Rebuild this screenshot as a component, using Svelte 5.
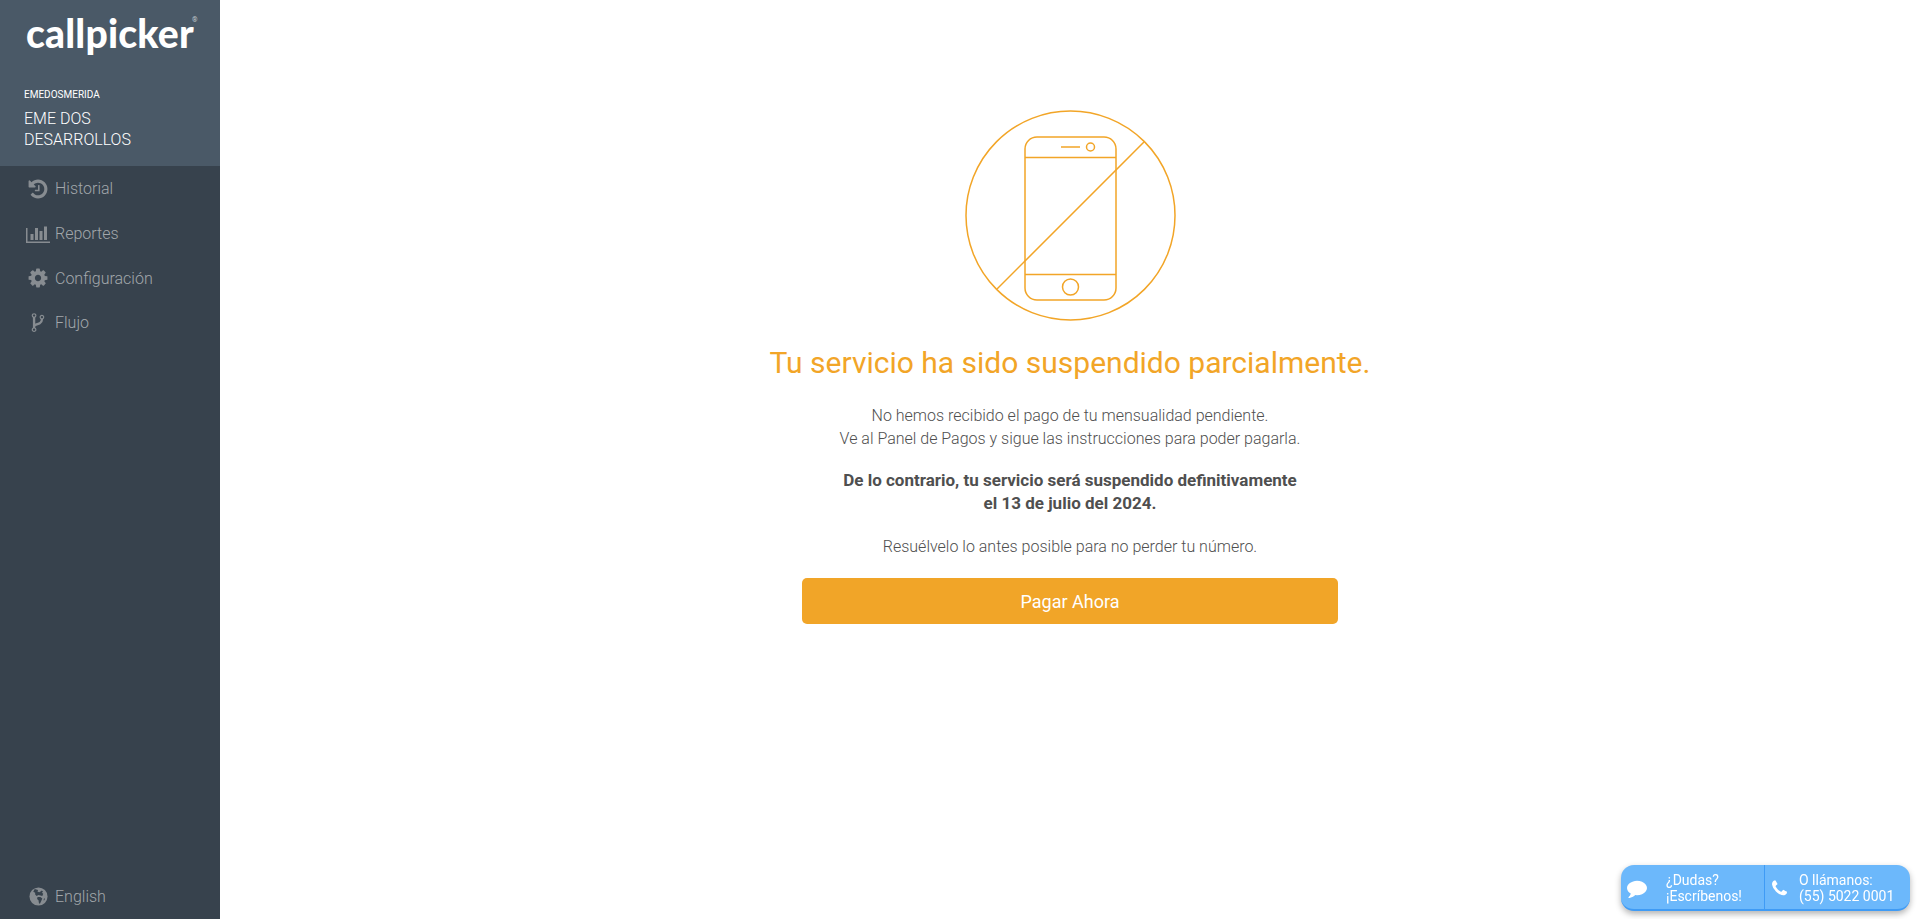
<script>
  const links = [
    { label: 'Historial', icon: 'history' },
    { label: 'Reportes', icon: 'chart' },
    { label: 'Configuración', icon: 'cog' },
    { label: 'Flujo', icon: 'fork' }
  ];

  const icons = {
    history: { box: '0 0 1792 1792', d: 'M1664 896q0 156-61 298t-164 245-245 164-298 61q-172 0-327-72.5t-264-204.5q-7-10-6.5-22.5t8.5-20.5l137-138q10-9 25-9 16 2 23 12 73 95 179 147t225 52q104 0 198.5-40.5t163.5-109.5 109.5-163.5 40.5-198.5-40.5-198.5-109.5-163.5-163.5-109.5-198.5-40.5q-98 0-188 35.5t-160 101.5l137 138q31 30 14 69-17 40-59 40h-448q-26 0-45-19t-19-45v-448q0-42 40-59 39-17 69 14l130 129q107-101 244.5-156.5t284.5-55.5q156 0 298 61t245 164 164 245 61 298zm-640-288v448q0 14-9 23t-23 9h-320q-14 0-23-9t-9-23v-64q0-14 9-23t23-9h224v-352q0-14 9-23t23-9h64q14 0 23 9t9 23z' },
    chart: { box: '0 0 2048 1792', d: 'M640 896v512h-256v-512h256zm384-512v1024h-256v-1024h256zm1024 1152v128h-2048v-1280h128v1152h1920zm-640-896v768h-256v-768h256zm384-384v1152h-256v-1152h256z' },
    cog: { box: '0 0 1792 1792', d: 'M1152 896q0-106-75-181t-181-75-181 75-75 181 75 181 181 75 181-75 75-181zm512-109v222q0 12-8 23t-20 13l-185 28q-19 54-39 91 35 50 107 138 10 12 10 25t-9 23q-27 37-99 108t-94 71q-12 0-26-9l-138-108q-44 23-91 38-16 136-29 186-7 28-36 28h-222q-14 0-24.5-8.5t-11.5-21.5l-28-184q-49-16-90-37l-141 107q-10 9-25 9-14 0-25-11-126-114-165-168-7-10-7-23 0-12 8-23 15-21 51-66.5t54-70.5q-27-50-41-99l-183-27q-13-2-21-12.5t-8-23.5v-222q0-12 8-23t19-13l186-28q14-46 39-92-40-57-107-138-10-12-10-24 0-10 9-23 26-36 98.5-107.5t94.5-71.5q13 0 26 10l138 107q44-23 91-38 16-136 29-186 7-28 36-28h222q14 0 24.5 8.5t11.5 21.5l28 184q49 16 90 37l142-107q9-9 24-9 13 0 25 10 129 119 165 170 7 8 7 22 0 12-8 23-15 21-51 66.5t-54 70.5q26 50 41 98l183 28q13 2 21 12.5t8 23.5z' },
    fork: { box: '-384 0 1792 1792', d: 'M288 1440q0-40-28-68t-68-28-68 28-28 68 28 68 68 28 68-28 28-68zm0-1152q0-40-28-68t-68-28-68 28-28 68 28 68 68 28 68-28 28-68zm640 128q0-40-28-68t-68-28-68 28-28 68 28 68 68 28 68-28 28-68zm96 0q0 52-26 96.5t-70 69.5q-2 287-226 414-67 38-203 81-128 40-169.5 71t-41.5 100v26q44 25 70 69.5t26 96.5q0 80-56 136t-136 56-136-56-56-136q0-52 26-96.5t70-69.5v-820q-44-25-70-69.5t-26-96.5q0-80 56-136t136-56 136 56 56 136q0 52-26 96.5t-70 69.5v497q54-26 154-57 55-17 87.5-29.5t70.5-31 59-39.5 40.5-51 28-69.5 8.5-91.5q-44-25-70-69.5t-26-96.5q0-80 56-136t136-56 136 56 56 136z' }
  };
</script>

<div class="page">
  <aside class="sidebar">
    <div class="account">
      <div class="logo">callpicker<span class="reg">®</span></div>
      <div class="user">EMEDOSMERIDA</div>
      <div class="company">EME DOS<br />DESARROLLOS</div>
    </div>

    <nav>
      {#each links as link}
        <a href="#top" class="nav-link">
          <span class="nav-icon">
            <svg viewBox={icons[link.icon].box} class={link.icon}><path d={icons[link.icon].d} /></svg>
          </span>
          {link.label}
        </a>
      {/each}
    </nav>

    <a href="#top" class="nav-link lang">
      <span class="nav-icon">
        <svg viewBox="0 0 20 20" class="globe">
          <circle cx="10" cy="10" r="9.5" />
          <path class="land" d="M6 2.2 9.5 3.2 9 5 11 5.5 13.5 3.8 14.8 5 13.5 6 15 7 14 9.5 12 9 10 8.5 8 9.5 6.5 8 6.5 6 4.5 5ZM9 10.5 12 10.5 14 12 13 14.5 11.5 17.5 10.5 17 10 14 8.5 12.5ZM15.5 12.5 16.6 11.5 16.5 13.5 15.5 14.5Z" />
        </svg>
      </span>
      English
    </a>
  </aside>

  <main>
    <svg class="phone" viewBox="0 0 212 212" fill="none">
      <circle cx="106.5" cy="105.5" r="104.5" />
      <rect x="61" y="27" width="91" height="163" rx="12" />
      <path d="M61 47.5H152M61 164.5H152M97 37H116" />
      <circle cx="126.5" cy="37" r="4" />
      <circle cx="106.5" cy="177" r="8" />
      <path d="M180 32 33 179" />
    </svg>

    <h1>Tu servicio ha sido suspendido parcialmente.</h1>

    <p>No hemos recibido el pago de tu mensualidad pendiente.<br />Ve al Panel de Pagos y sigue las instrucciones para poder pagarla.</p>
    <p class="strong">De lo contrario, tu servicio será suspendido definitivamente<br />el 13 de julio del 2024.</p>
    <p>Resuélvelo lo antes posible para no perder tu número.</p>

    <button>Pagar Ahora</button>
  </main>

  <div class="contact">
    <div class="contact-item chat">
      <svg viewBox="0 0 1792 1792" class="chat-icon"><path d="M1792 896q0 174-120 321.5t-326 233-450 85.5q-70 0-145-8-198 175-460 242-49 14-114 22-17 2-30.5-9t-17.5-29v-1q-3-4-.5-12t2-10 4.5-9.5l6-9 7-8.5 8-9q7-8 31-34.5t34.5-38 31-39.5 32.5-51 27-59 26-76q-157-89-247.5-220t-90.5-281q0-130 71-248.5t191-204.5 286-136.5 348-50.5q244 0 450 85.5t326 233 120 321.5z" /></svg>
      <span>¿Dudas?<br />¡Escríbenos!</span>
    </div>
    <div class="contact-item call">
      <svg viewBox="0 0 1792 1792" class="call-icon"><path d="M1600 1240q0 27-10 70.5t-21 68.5q-21 50-122 106-94 51-186 51-27 0-53-3.5t-57.5-12.5-47-14.5-55.5-20.5-49-18q-98-35-175-83-127-79-264-216t-216-264q-48-77-83-175-3-9-18-49t-20.5-55.5-14.5-47-12.5-57.5-3.5-53q0-92 51-186 56-101 106-122 25-11 68.5-21t70.5-10q14 0 21 3 18 6 53 76 11 19 30 54t35 63.5 31 53.5q3 4 17.5 25t21.5 35.5 7 28.5q0 20-28.5 50t-62 55-62 53-28.5 46q0 9 5 22.5t8.5 20.5 14 24 11.5 19q76 137 174 235t235 174q2 1 19 11.5t24 14 20.5 8.5 22.5 5q18 0 46-28.5t53-62 55-62 50-28.5q14 0 28.5 7t35.5 21.5 25 17.5q25 15 53.5 31t63.5 35 54 30q70 35 76 53 3 7 3 21z" /></svg>
      <span>O llámanos:<br />(55) 5022 0001</span>
    </div>
  </div>
</div>

<style>
  :global(body) {
    margin: 0;
    font-family: 'Roboto', sans-serif;
    background: #fff;
  }

  .page {
    display: flex;
    height: 919px;
    overflow: hidden;
  }

  /* Sidebar */
  .sidebar {
    width: 220px;
    flex-shrink: 0;
    display: flex;
    flex-direction: column;
    background: #37424d;
  }

  .account {
    height: 166px;
    box-sizing: border-box;
    padding: 11px 24px 0;
    background: #4a5967;
    color: #fff;
  }

  .logo {
    position: relative;
    width: 172px;
    margin-left: 2px;
    height: 58px;
    font-family: 'Lato', sans-serif;
    font-weight: 900;
    font-size: 39px;
    line-height: 44px;
    letter-spacing: 0.2px;
    white-space: nowrap;
  }

  .reg {
    position: absolute;
    top: 5px;
    left: 166px;
    font-family: 'Roboto', sans-serif;
    font-weight: 400;
    font-size: 7px;
    line-height: 8px;
    letter-spacing: 0;
    color: #c3c9cf;
  }

  .user {
    margin-top: 20px;
    font-size: 10px;
    font-weight: 400;
    line-height: 12px;
  }

  .company {
    margin-top: 7px;
    font-size: 16px;
    font-weight: 300;
    line-height: 21px;
  }

  nav {
    padding-top: 0.5px;
  }

  .nav-link {
    display: flex;
    align-items: center;
    height: 44.7px;
    padding-left: 25px;
    font-size: 16px;
    font-weight: 300;
    color: #a2a7ab;
    text-decoration: none;
  }

  .nav-icon {
    width: 30px;
    display: flex;
    justify-content: center;
    box-sizing: border-box;
    padding-right: 4px;
  }

  .nav-icon svg {
    width: 24px;
    height: 22px;
    fill: #878c91;
  }

  .lang {
    margin-top: auto;
    height: 46px;
  }

  .nav-icon .globe {
    width: 19px;
    height: 19px;
  }

  .land {
    fill: #37424d;
  }

  /* Notice */
  main {
    flex: 1;
    display: flex;
    flex-direction: column;
    align-items: center;
    padding-top: 110px;
    color: #4f4f4f;
  }

  .phone {
    width: 212px;
    height: 212px;
    flex-shrink: 0;
  }

  .phone * {
    stroke: #f2a527;
    stroke-width: 1.5;
  }

  h1 {
    margin: 23px 0 23px;
    font-size: 30px;
    font-weight: 400;
    line-height: 36px;
    color: #f2a527;
  }

  p {
    margin: 0 0 19px;
    font-size: 16px;
    font-weight: 300;
    line-height: 23px;
    text-align: center;
  }

  .strong {
    margin-bottom: 20px;
    font-size: 17px;
    font-weight: 700;
  }

  button {
    width: 536px;
    height: 46px;
    margin-top: 1px;
    border: 0;
    border-radius: 5px;
    background: #f1a528;
    color: #fff;
    font-family: inherit;
    font-size: 18px;
    font-weight: 400;
  }

  /* Contact widget */
  .contact {
    position: fixed;
    right: 10px;
    bottom: 8px;
    width: 289px;
    height: 46px;
    display: flex;
    box-sizing: border-box;
    border-bottom: 2px solid #3f9bf5;
    border-radius: 13px;
    background: #6cb8fb;
    box-shadow: 0 3px 6px rgba(0, 0, 0, 0.3);
    color: #fff;
    font-size: 14px;
    line-height: 16px;
  }

  .contact-item {
    display: flex;
    align-items: center;
    padding-top: 2px;
  }

  .chat {
    width: 143px;
    border-right: 1px solid #3f9bf5;
  }

  .chat-icon {
    width: 20px;
    height: 20px;
    margin-left: 6px;
    fill: #fff;
  }

  .chat span {
    margin-left: 19px;
  }

  .call-icon {
    width: 19px;
    height: 19px;
    margin-left: 5px;
    fill: #fff;
  }

  .call span {
    margin-left: 10px;
  }
</style>
